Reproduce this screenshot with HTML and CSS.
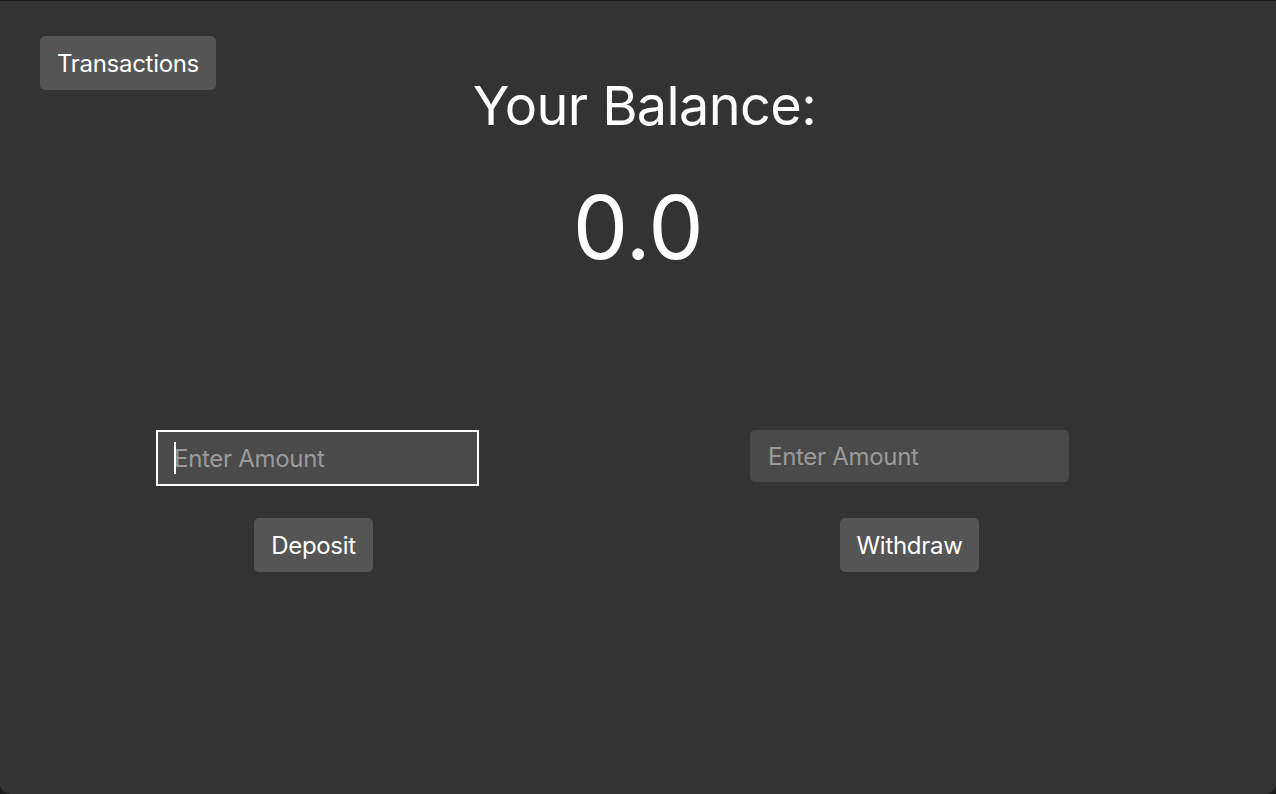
FILE: index.html
```html
<!DOCTYPE html>
<html lang="en">
<head>
<meta charset="utf-8">
<title>Balance</title>
<link rel="stylesheet" href="styles.css">
</head>
<body>
<div class="window">
  <header class="topbar">
    <button class="btn">Transactions</button>
  </header>
  <section class="balance">
    <h1 class="title">Your Balance:</h1>
    <div class="amount">0.0</div>
  </section>
  <section class="actions">
    <div class="col col-left">
      <div class="field">
        <input class="input input-focused" type="text" placeholder="Enter Amount">
        <span class="caret"></span>
      </div>
      <button class="btn">Deposit</button>
    </div>
    <div class="col col-right">
      <div class="field">
        <input class="input" type="text" placeholder="Enter Amount">
      </div>
      <button class="btn">Withdraw</button>
    </div>
  </section>
</div>
</body>
</html>
```

FILE: styles.css
```css
* { box-sizing: border-box; }
html, body {
  margin: 0;
  padding: 0;
  width: 1276px;
  height: 794px;
  background: #1b1b1b;
  overflow: hidden;
}
body {
  font-family: Inter, "Noto Sans", "Liberation Sans", sans-serif;
  color: #fff;
}
.window {
  width: 1276px;
  height: 794px;
  background: #333333;
  border-top: 1px solid #161616;
  border-radius: 0 0 10px 10px;
  display: flex;
  flex-direction: column;
}
.topbar {
  padding: 35px 0 0 40px;
  height: 89px;
}
.btn {
  font-family: inherit;
  font-size: 24px;
  color: #fff;
  background: #555555;
  border: none;
  border-radius: 5px;
  height: 54px;
  padding: 0 17px;
  letter-spacing: -0.3px;
  cursor: pointer;
}
.balance {
  display: flex;
  flex-direction: column;
  align-items: center;
  margin-top: -14px;
}
.title {
  margin: 0;
  font-weight: 400;
  font-size: 54px;
  line-height: 60px;
  letter-spacing: -0.6px;
  padding-left: 13px;
}
.amount {
  margin-top: 46px;
  font-size: 88px;
  line-height: 90px;
  font-weight: 400;
  letter-spacing: -0.5px;
}
.actions {
  display: flex;
  margin-top: 158px;
  padding-left: 156px;
  gap: 271px;
}
.col {
  display: flex;
  flex-direction: column;
  align-items: center;
  gap: 32px;
}
.col-left { width: 323px; }
.col-right { width: 319px; }
.col-left .btn { margin-left: -8px; }
.field {
  position: relative;
  height: 56px;
  width: 100%;
}
.input {
  display: block;
  font-family: inherit;
  font-size: 24px;
  color: #fff;
  background: #4a4a4a;
  border: none;
  border-radius: 5px;
  width: 319px;
  height: 52px;
  padding: 0 18px;
  outline: none;
  letter-spacing: -0.3px;
}
.input::placeholder { color: #9a9a9a; }
.input-focused {
  width: 323px;
  height: 56px;
  border: 2px solid #ffffff;
  border-radius: 0;
  padding: 0 16px;
}
.caret {
  position: absolute;
  left: 18px;
  top: 12px;
  width: 2px;
  height: 32px;
  background: #fff;
}
```
